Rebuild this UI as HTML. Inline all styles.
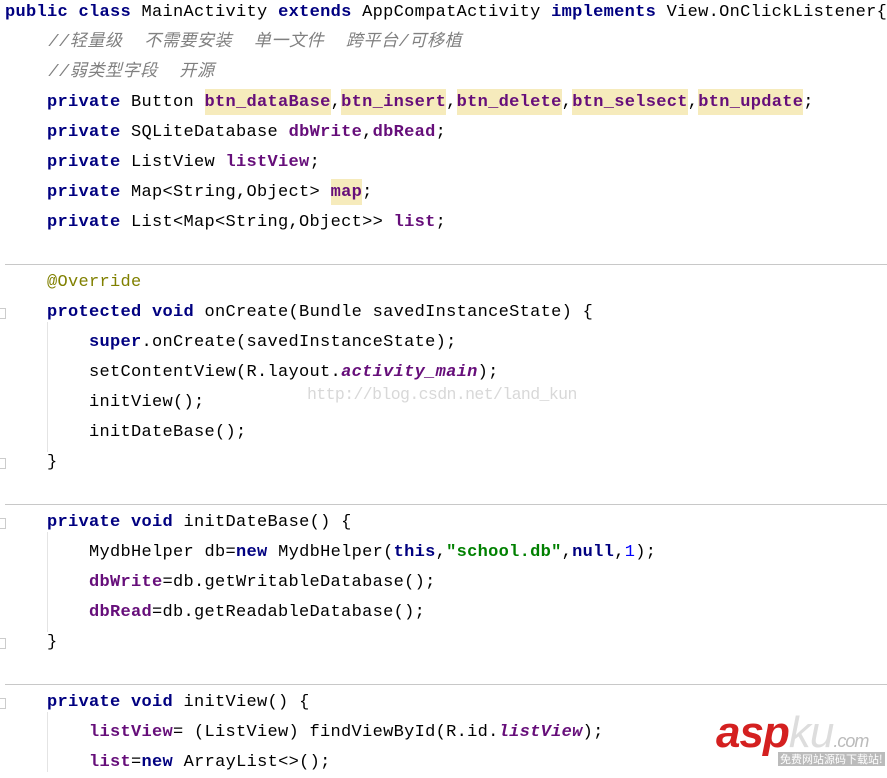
<!DOCTYPE html>
<html><head><meta charset="utf-8"><style>
body{margin:0;width:887px;height:771px;background:#fff;overflow:hidden;position:relative;font-family:"Liberation Mono","Noto Sans CJK SC",monospace;font-size:17px;}
.l{position:absolute;left:5px;white-space:pre;height:30px;line-height:30px;color:#000;letter-spacing:0.3px}
.k{color:#000080;font-weight:bold}
.f{color:#660E7A;font-weight:bold}
.h{background:#F6EBBC;padding:4px 0 3px}
.c{color:#808080;font-style:italic;font-family:"Liberation Mono","Noto Sans CJK SC",monospace;letter-spacing:0.6px}
.a{color:#808000}
.s{color:#008000;font-weight:bold}
.n{color:#0000FF}
.i{color:#660E7A;font-weight:bold;font-style:italic}
.sep{position:absolute;left:5px;right:0;height:1px;background:#c8c8c8}
.g{position:absolute;left:47px;width:1px;background:#e4e4e4}
.fold{position:absolute;left:0;width:5px;height:9px;border:1px solid #ccc;border-left:none;}
</style></head><body>
<div class="l" style="top:-2px"><span class="k">public class </span>MainActivity <span class="k">extends </span>AppCompatActivity <span class="k">implements </span>View.OnClickListener{</div>
<div class="l c" style="top:28px">    //轻量级  不需要安装  单一文件  跨平台/可移植</div>
<div class="l c" style="top:58px">    //弱类型字段  开源</div>
<div class="l" style="top:88px">    <span class="k">private </span>Button <span class="f h">btn_dataBase</span>,<span class="f h">btn_insert</span>,<span class="f h">btn_delete</span>,<span class="f h">btn_selsect</span>,<span class="f h">btn_update</span>;</div>
<div class="l" style="top:118px">    <span class="k">private </span>SQLiteDatabase <span class="f">dbWrite</span>,<span class="f">dbRead</span>;</div>
<div class="l" style="top:148px">    <span class="k">private </span>ListView <span class="f">listView</span>;</div>
<div class="l" style="top:178px">    <span class="k">private </span>Map&lt;String,Object&gt; <span class="f h">map</span>;</div>
<div class="l" style="top:208px">    <span class="k">private </span>List&lt;Map&lt;String,Object&gt;&gt; <span class="f">list</span>;</div>
<div class="sep" style="top:264px"></div>
<div class="l a" style="top:268px">    @Override</div>
<div class="l" style="top:298px">    <span class="k">protected void </span>onCreate(Bundle savedInstanceState) {</div>
<div class="l" style="top:328px">        <span class="k">super</span>.onCreate(savedInstanceState);</div>
<div class="l" style="top:358px">        setContentView(R.layout.<span class="i">activity_main</span>);</div>
<div class="l" style="top:388px">        initView();</div>
<div class="l" style="top:418px">        initDateBase();</div>
<div class="l" style="top:448px">    }</div>
<div class="g" style="top:322px;height:130px"></div>
<div style="position:absolute;left:307px;top:385px;color:#d8d8d8;font-family:'Liberation Mono',monospace;font-size:16.5px;letter-spacing:-0.6px">http://blog.csdn.net/land_kun</div>
<div class="sep" style="top:504px"></div>
<div class="l" style="top:508px">    <span class="k">private void </span>initDateBase() {</div>
<div class="l" style="top:538px">        MydbHelper db=<span class="k">new </span>MydbHelper(<span class="k">this</span>,<span class="s">"school.db"</span>,<span class="k">null</span>,<span class="n">1</span>);</div>
<div class="l" style="top:568px">        <span class="f">dbWrite</span>=db.getWritableDatabase();</div>
<div class="l" style="top:598px">        <span class="f">dbRead</span>=db.getReadableDatabase();</div>
<div class="l" style="top:628px">    }</div>
<div class="g" style="top:532px;height:100px"></div>
<div class="sep" style="top:684px"></div>
<div class="l" style="top:688px">    <span class="k">private void </span>initView() {</div>
<div class="l" style="top:718px">        <span class="f">listView</span>= (ListView) findViewById(R.id.<span class="i">listView</span>);</div>
<div class="l" style="top:748px">        <span class="f">list</span>=<span class="k">new </span>ArrayList&lt;&gt;();</div>
<div class="g" style="top:712px;height:60px"></div>
<div class="fold" style="top:308px"></div><div class="fold" style="top:458px"></div>
<div class="fold" style="top:518px"></div><div class="fold" style="top:638px"></div>
<div class="fold" style="top:698px"></div>
<div style="position:absolute;left:716px;top:712px;background:#fff;width:171px;height:59px"></div>
<div style="position:absolute;left:716px;top:708px;font-family:'Liberation Sans',sans-serif;font-weight:bold;font-style:italic;font-size:44px;color:#d42020;letter-spacing:-1px">asp<span style="color:#ddd;font-weight:normal">ku</span><span style="font-size:18px;color:#bbb;font-weight:normal">.com</span></div>
<div style="position:absolute;left:778px;top:752px;font-size:11px;color:#fff;background:#bbb;padding:0 2px;font-family:'Noto Sans CJK SC',sans-serif;line-height:14px">免费网站源码下载站!</div>
</body></html>
